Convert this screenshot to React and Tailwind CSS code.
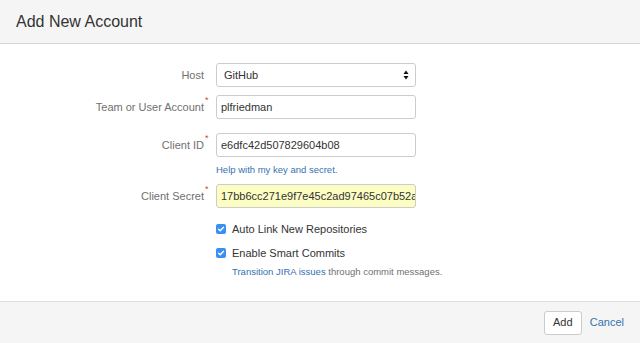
import React from 'react';

const font = { fontFamily: '"Liberation Sans", Arial, sans-serif' };

function Label({ children, required }) {
  return (
    <div className="w-[204px] flex justify-end shrink-0">
      <span className="relative text-[11px] text-[#707070]">
        {children}
        {required && (
          <span className="absolute left-full top-[-5px] ml-[1px] text-[9px] text-[#d04437]">*</span>
        )}
      </span>
    </div>
  );
}

function TextInput({ value, autofill }) {
  return (
    <div
      className={`ml-[12px] w-[200px] h-[24px] border border-[#cccccc] rounded-[3px] flex items-center pl-[4px] pr-[2px] overflow-hidden whitespace-nowrap text-[11px] text-[#333333] ${
        autofill ? 'bg-[#fbfdc2]' : 'bg-white'
      }`}
    >
      <span className="truncate-none">{value}</span>
    </div>
  );
}

function Checkbox({ label }) {
  return (
    <div className="flex items-center h-[20px] pl-[216px]">
      <div className="w-[10px] h-[10px] rounded-[2px] bg-[#3b8ff0] flex items-center justify-center">
        <svg width="8" height="8" viewBox="0 0 8 8">
          <path d="M1.5 4.2 L3.2 5.8 L6.5 2.2" stroke="white" strokeWidth="1.4" fill="none" strokeLinecap="round" strokeLinejoin="round" />
        </svg>
      </div>
      <span className="ml-[6px] text-[11px] text-[#333333]">{label}</span>
    </div>
  );
}

export default function App() {
  return (
    <div className="h-screen w-full flex flex-col bg-white" style={font}>
      {/* Header */}
      <div className="h-[44px] bg-[#f5f5f5] border-b border-[#d6d6d6] flex items-center px-[16px] pt-[1px] shrink-0">
        <h2 className="text-[16px] text-[#333333] leading-none">Add New Account</h2>
      </div>

      {/* Body */}
      <div className="flex-1 flex flex-col pt-[19px]">
        <div className="flex items-center h-[24px]">
          <Label>Host</Label>
          <div className="ml-[12px] w-[200px] h-[24px] border border-[#cccccc] rounded-[3px] bg-white flex items-center justify-between pl-[7px] pr-[6px] text-[11px] text-[#333333]">
            <span>GitHub</span>
            <svg width="6" height="10" viewBox="0 0 6 10">
              <path d="M3 0.5 L5.5 4 L0.5 4 Z" fill="#111" />
              <path d="M3 9.5 L5.5 6 L0.5 6 Z" fill="#111" />
            </svg>
          </div>
        </div>

        <div className="flex items-center h-[24px] mt-[8px]">
          <Label required>Team or User Account</Label>
          <TextInput value="plfriedman" />
        </div>

        <div className="flex items-center h-[24px] mt-[14px]">
          <Label required>Client ID</Label>
          <TextInput value="e6dfc42d507829604b08" />
        </div>

        <div className="pl-[216px] mt-[6px] text-[9.5px] leading-[13px]">
          <a className="text-[#3572b0]">Help with my key and secret.</a>
        </div>

        <div className="flex items-center h-[24px] mt-[8px]">
          <Label required>Client Secret</Label>
          <TextInput value="17bb6cc271e9f7e45c2ad97465c07b52a1" autofill />
        </div>

        <div className="mt-[11px]">
          <Checkbox label="Auto Link New Repositories" />
        </div>
        <div className="mt-[4px]">
          <Checkbox label="Enable Smart Commits" />
        </div>

        <div className="pl-[232px] mt-[2px] text-[9.5px] leading-[14px] text-[#707070]">
          <a className="text-[#3572b0]">Transition JIRA issues</a> through commit messages.
        </div>
      </div>

      {/* Footer */}
      <div className="h-[42px] bg-[#f5f5f5] border-t border-[#dddddd] flex items-center justify-end pr-[16px] shrink-0">
        <button className="h-[24px] w-[38px] bg-white border border-[#cccccc] rounded-[3px] text-[11px] text-[#333333]">
          Add
        </button>
        <a className="ml-[8px] text-[11px] text-[#3572b0]">Cancel</a>
      </div>
    </div>
  );
}
